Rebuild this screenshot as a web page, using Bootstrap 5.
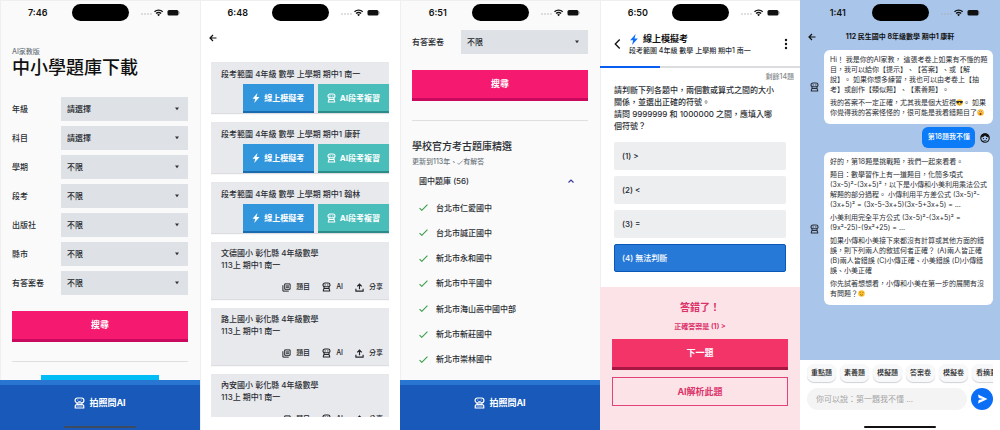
<!DOCTYPE html>
<html lang="zh-Hant">
<head>
<meta charset="utf-8">
<meta name="viewport" content="width=device-width, initial-scale=1">
<title>中小學題庫下載</title>
<link href="https://cdn.jsdelivr.net/npm/bootstrap@5.3.0/dist/css/bootstrap.min.css" rel="stylesheet">
<style>
  body { font-family: Inter, "Noto Sans CJK TC", sans-serif; font-size: 8px; line-height: 12px; color: #2b2e34; font-weight: 500; text-spacing-trim: space-all; }
  h1, h2, p { margin: 0; }
  button, input, select { font-family: inherit; }
  svg { display: block; flex: none; }
  .phone { height: 100vh; min-height: 430px; overflow: hidden; background: #fff; box-shadow: inset 1px 1px #efefef; }
  .phone-gray { background: #fafafa; }
  .phone-chat { background: #a9c5ea; box-shadow: none; }

  /* status bar */
  .status { display: grid; grid-template-columns: 1fr 57px 1fr; align-items: center; padding-top: 4px; color: #111; }
  .status time { font-size: 9px; font-weight: 600; line-height: 17px; padding-left: 4px; }
  .status svg { margin-left: 12px; }
  .island { height: 17px; border-radius: 9px; background: #000; }

  /* search form */
  .pad-x { padding-left: 12px; padding-right: 12px; }
  .tiny { font-size: 7px; line-height: 10px; }
  .brand { padding-top: 26px; }
  .page-title { font-size: 18px; line-height: 22px; font-weight: 500; color: #111; padding-bottom: 18px; }
  .filters { display: grid; gap: 5px; }
  .filter { display: grid; grid-template-columns: 49px 1fr; align-items: center; }
  .form-select { height: 24px; border: 0; border-radius: 0; font-size: 8px; line-height: 12px; font-weight: 500; padding: 0 6px; color: #22252a;
    background: #dee2e6 url("data:image/svg+xml,%3Csvg xmlns='http://www.w3.org/2000/svg' viewBox='0 0 6 4'%3E%3Cpath d='M1 .5h4L3 3.2z' fill='%23333'/%3E%3C/svg%3E") no-repeat right 8px center / 6px 4px; }
  .block-btn { display: block; width: 100%; height: 31px; border: 0; border-bottom: 3px solid #c8095d; border-radius: 0; background: #f5196f; color: #fff; font-size: 9px; line-height: 12px; font-weight: 700; padding: 0; }
  .rule { border-top: 1px solid #dedfe0; margin: 19px 0 0; }
  .promo { height: 30px; width: 67%; background: #00bdf5; margin: 13px auto 0; }
  .ask-bar { height: 50px; border: 0; border-top: 5px solid #2876d2; background: #1859ba; color: #fff; font-size: 9px; line-height: 12px; font-weight: 700; gap: 4px; padding: 0 0 10px; }
  .home-line { width: 72px; height: 2px; border-radius: 1px; left: 50%; margin-left: -36px; bottom: 2px; background: #3d4a60; }
  .phone-chat .home-line { background: #111; }

  /* exam list */
  .back-row { padding: 13px 9px 0; }
  .papers { gap: 9px; margin: 20px 11px 13px; }
  .paper { background: #e8e9ed; box-shadow: 0 1px 1px #dcdde0; flex: none; }
  .paper-name { padding: 6px 10px 4px; }
  .act { height: 29px; border: 0; border-bottom: 2px solid #1b6cae; background: #3296dc; color: #fff; font-size: 8px; line-height: 12px; font-weight: 700; width: 40%; gap: 4px; padding: 0; }
  .act-teal { background: #48bdba; border-color: #2c8a89; }
  .school-name { padding: 5px 10px 10px; }
  .links { gap: 12px; padding: 0 6px 6px; font-size: 7px; line-height: 12px; }
  .links a { color: #22252a; text-decoration: none; gap: 5px; }

  /* school archive */
  .archive { padding-top: 9px; }
  .section-title { font-size: 10px; line-height: 14px; font-weight: 500; margin-top: 18px; }
  .fold { border: 0; background: none; padding: 0 14px 0 7px; height: 28px; font-size: 8px; font-weight: 500; line-height: 12px; color: #2b2e34; }
  .school-list { padding: 0 7px; margin: 0 0 8px; list-style: none; }
  .school-list li { gap: 8px; }
  .school-list svg { color: #3a9f4a; }

  /* quiz */
  .quiz-head { padding: 11px 12px 10px 14px; }
  .quiz-title { font-size: 9px; line-height: 14px; font-weight: 700; color: #111; }
  .progress { height: 2px; border-radius: 0; background: #dcdcde; }
  .progress-bar { background: #0b5df0; }
  .icon-btn { border: 0; background: none; padding: 0; color: #111; }
  .remaining { color: #85888c; padding: 4px 6px 0; }
  .question { padding: 2px 14px 10px; }
  .choices { display: grid; gap: 6px; padding: 0 14px; }
  .choice { height: 28px; border: 0; border-radius: 2px; background: #edeef0; text-align: left; padding: 0 8px; font-size: 8px; line-height: 12px; font-weight: 500; color: #22252a; }
  .choice-on { background: #2779d8; border: 1px solid #0b57b8; color: #fff; padding: 0 7px; }
  .result { background: #fbe3e8; color: #dc3268; padding: 12px 12px 24px; margin-top: 15px; }
  .result h2 { font-size: 10px; line-height: 16px; font-weight: 700; }
  .answer { padding: 7px 0 7px; }
  .next-btn { background: #f23468; border-color: #a81644; }
  .line-btn { height: 29px; border: 1px solid #e0447a; background: none; color: #dc3268; margin-top: 7px; }

  /* chat */
  .chat-head { display: grid; grid-template-columns: 16px 1fr 16px; align-items: center; padding: 9px 8px 6px; font-size: 7px; line-height: 14px; font-weight: 700; color: #111; text-align: center; }
  .msg { display: grid; grid-template-columns: 14px minmax(0, 1fr); align-items: center; padding: 0 7px 0 10px; }
  .bubble { background: #fff; border-radius: 6px; padding: 5px 5px 6px 6px; font-size: 7px; line-height: 10px; display: grid; gap: 3px; white-space: nowrap; font-weight: 400; }
  .bubble svg { display: inline-block; vertical-align: -1px; }
  .mine { gap: 5px; padding: 3px 10px 4px; }
  .mine .bubble { background: #0b7bf8; color: #fff; font-weight: 500; }
  .composer { background: #fff; padding: 4px 7px 20px; }
  .chips { gap: 4px; padding-bottom: 6px; overflow: hidden; }
  .chip { flex: none; height: 18px; border: 0; border-radius: 7px; background: #f7f8fa; box-shadow: 0 1px 1px #cfd1d6; font-size: 7px; line-height: 10px; font-weight: 500; padding: 0 4px; color: #222; }
  .say { height: 22px; border: 0; border-radius: 11px; background: #f4f4f4; font-size: 8px; line-height: 12px; padding: 0 9px; color: #222; min-width: 0; }
  .say::placeholder { color: #a5a5a5; opacity: 1; }
  .send { width: 22px; height: 22px; border: 0; border-radius: 50%; background: #0b6ff5; padding: 0; flex: none; }
</style>
</head>
<body>
<svg width="0" height="0" class="position-absolute" aria-hidden="true">
  <symbol id="robot" viewBox="0 0 20 22">
    <path d="M6.500 2h7a4.300 4.300 0 0 1 0 8.600h-7a4.300 4.300 0 0 1 0-8.600zM3 20v-2q0-3.600 3.600-3.600h6.800Q17 14.400 17 18v2zM4.500 10v5M15.500 10v5" fill="none" stroke="currentColor" stroke-width="2.400"/>
    <circle cx="7" cy="6.300" r="1.300" fill="currentColor"/><circle cx="13" cy="6.300" r="1.300" fill="currentColor"/>
  </symbol>
  <symbol id="robot-solid" viewBox="0 0 22 24">
    <path d="M7 2h8a4.800 4.800 0 0 1 0 9.600H7A4.800 4.800 0 0 1 7 2zM5 11l2 4M17 11l-2 4" fill="none" stroke="currentColor" stroke-width="2.400"/>
    <path d="M6.500 6h2M13.500 6h2M8.500 9h5" stroke="currentColor" stroke-width="1.600"/>
    <path d="M2.500 22v-3.500q0-3.500 4-3.500h9q4 0 4 3.500V22z" fill="none" stroke="currentColor" stroke-width="2.400"/><path d="M5 18h12" stroke="currentColor" stroke-width="1.500"/>
  </symbol>
  <symbol id="bolt" viewBox="0 0 16 20"><path d="M11 0 1 11.500h5.500L4.500 20 15 8H9z" fill="currentColor"/></symbol>
  <symbol id="arrow" viewBox="0 0 16 16"><path d="M15 8H2M8 2 2 8l6 6" fill="none" stroke="currentColor" stroke-width="2.400"/></symbol>
  <symbol id="check" viewBox="0 0 16 12"><path d="m1 7 4 4L15 1" fill="none" stroke="currentColor" stroke-width="2"/></symbol>
  <symbol id="pages" viewBox="0 0 20 20"><path d="M6 2h12v12H6zM2 5v13h13M8.500 6.500h7M8.500 9.500h7" fill="none" stroke="currentColor" stroke-width="2.200"/></symbol>
  <symbol id="share" viewBox="0 0 20 20"><path d="M10 14V3M5 7.500 10 2.500l5 5M2 12.500V18h16v-5.500" fill="none" stroke="currentColor" stroke-width="2.600"/></symbol>
  <symbol id="signal" viewBox="0 0 39 9">
    <g fill="#aaa"><circle cx="1" cy="6" r=".7"/><circle cx="4" cy="6" r=".7"/><circle cx="7" cy="6" r=".7"/><circle cx="10" cy="6" r=".7"/></g>
    <path d="M13.500 3.700a6 6 0 0 1 8.200 0M15.100 5.600a3.500 3.500 0 0 1 5 0" fill="none" stroke="#111" stroke-width="1.400"/><path d="m17.600 8.200-1.400-1.400a2 2 0 0 1 2.800 0z" fill="#111"/>
    <rect x="26.500" y="2" width="11" height="5.500" rx="1.600" fill="#111"/><path d="M38.300 3.800v2" stroke="#999" stroke-width=".8"/>
  </symbol>
</svg>

<main class="row g-0 row-cols-5">

  <section class="col phone phone-gray d-flex flex-column position-relative">
    <div class="status"><time class="text-center">7:46</time><div class="island"></div><svg width="39" height="9"><use href="#signal"/></svg></div>
    <div class="pad-x flex-fill overflow-hidden">
      <p class="tiny text-secondary brand">AI家教版</p>
      <h1 class="page-title">中小學題庫下載</h1>
      <form class="filters">
        <div class="filter"><label for="f1">年級</label><select id="f1" class="form-select"><option>請選擇</option></select></div>
        <div class="filter"><label for="f2">科目</label><select id="f2" class="form-select"><option>請選擇</option></select></div>
        <div class="filter"><label for="f3">學期</label><select id="f3" class="form-select"><option>不限</option></select></div>
        <div class="filter"><label for="f4">段考</label><select id="f4" class="form-select"><option>不限</option></select></div>
        <div class="filter"><label for="f5">出版社</label><select id="f5" class="form-select"><option>不限</option></select></div>
        <div class="filter"><label for="f6">縣市</label><select id="f6" class="form-select"><option>不限</option></select></div>
        <div class="filter"><label for="f7">有答案卷</label><select id="f7" class="form-select"><option>不限</option></select></div>
      </form>
      <button type="button" class="block-btn mt-3">搜尋</button>
      <div class="rule"></div>
      <div class="promo"></div>
    </div>
    <button type="button" class="ask-bar d-flex align-items-center justify-content-center flex-shrink-0"><svg width="11" height="12"><use href="#robot-solid"/></svg>拍照問AI</button>
    <div class="home-line position-absolute"></div>
  </section>

  <section class="col phone d-flex flex-column">
    <div class="status"><time class="text-center">6:48</time><div class="island"></div><svg width="39" height="9"><use href="#signal"/></svg></div>
    <div class="back-row"><button type="button" class="icon-btn d-block" aria-label="返回"><svg width="8" height="8"><use href="#arrow"/></svg></button></div>
    <div class="papers d-flex flex-column overflow-hidden flex-fill">
      <article class="paper"><p class="paper-name">段考範圍 4年級 數學 上學期 期中1 南一</p>
        <div class="d-flex justify-content-end gap-1"><button type="button" class="act d-flex align-items-center justify-content-center"><svg width="8" height="10"><use href="#bolt"/></svg>線上模擬考</button><button type="button" class="act act-teal d-flex align-items-center justify-content-center"><svg width="9" height="10"><use href="#robot"/></svg>AI段考複習</button></div></article>
      <article class="paper"><p class="paper-name">段考範圍 4年級 數學 上學期 期中1 康軒</p>
        <div class="d-flex justify-content-end gap-1"><button type="button" class="act d-flex align-items-center justify-content-center"><svg width="8" height="10"><use href="#bolt"/></svg>線上模擬考</button><button type="button" class="act act-teal d-flex align-items-center justify-content-center"><svg width="9" height="10"><use href="#robot"/></svg>AI段考複習</button></div></article>
      <article class="paper"><p class="paper-name">段考範圍 4年級 數學 上學期 期中1 翰林</p>
        <div class="d-flex justify-content-end gap-1"><button type="button" class="act d-flex align-items-center justify-content-center"><svg width="8" height="10"><use href="#bolt"/></svg>線上模擬考</button><button type="button" class="act act-teal d-flex align-items-center justify-content-center"><svg width="9" height="10"><use href="#robot"/></svg>AI段考複習</button></div></article>
      <article class="paper"><p class="school-name">文德國小 彰化縣 4年級數學<br>113上 期中1 南一</p>
        <div class="links d-flex justify-content-end"><a href="#" class="d-flex align-items-center"><svg width="9" height="9"><use href="#pages"/></svg>題目</a><a href="#" class="d-flex align-items-center"><svg width="9" height="10"><use href="#robot"/></svg>AI</a><a href="#" class="d-flex align-items-center"><svg width="9" height="9"><use href="#share"/></svg>分享</a></div></article>
      <article class="paper"><p class="school-name">路上國小 彰化縣 4年級數學<br>113上 期中1 南一</p>
        <div class="links d-flex justify-content-end"><a href="#" class="d-flex align-items-center"><svg width="9" height="9"><use href="#pages"/></svg>題目</a><a href="#" class="d-flex align-items-center"><svg width="9" height="10"><use href="#robot"/></svg>AI</a><a href="#" class="d-flex align-items-center"><svg width="9" height="9"><use href="#share"/></svg>分享</a></div></article>
      <article class="paper"><p class="school-name">內安國小 彰化縣 4年級數學<br>113上 期中1 南一</p>
        <div class="links d-flex justify-content-end"><a href="#" class="d-flex align-items-center"><svg width="9" height="9"><use href="#pages"/></svg>題目</a><a href="#" class="d-flex align-items-center"><svg width="9" height="10"><use href="#robot"/></svg>AI</a><a href="#" class="d-flex align-items-center"><svg width="9" height="9"><use href="#share"/></svg>分享</a></div></article>
    </div>
  </section>

  <section class="col phone phone-gray d-flex flex-column">
    <div class="status"><time class="text-center">6:51</time><div class="island"></div><svg width="39" height="9"><use href="#signal"/></svg></div>
    <div class="archive pad-x flex-fill d-flex flex-column overflow-hidden">
      <div class="filter"><label for="g1">有答案卷</label><select id="g1" class="form-select"><option>不限</option></select></div>
      <button type="button" class="block-btn mt-3 flex-shrink-0">搜尋</button>
      <div class="rule"></div>
      <h2 class="section-title">學校官方考古題庫精選</h2>
      <p class="tiny text-secondary d-flex align-items-center pt-1">更新到113年、<svg width="6" height="5"><use href="#check"/></svg>有解答</p>
      <button type="button" class="fold d-flex align-items-center justify-content-between flex-shrink-0">國中題庫 (56)<svg width="6" height="4" viewBox="0 0 12 8"><path d="m1 7 5-5 5 5" fill="none" stroke="#3a3aa0" stroke-width="2.400"/></svg></button>
      <ul class="school-list d-flex flex-column flex-fill">
        <li class="d-flex align-items-center flex-fill"><svg width="9" height="7"><use href="#check"/></svg>台北市仁愛國中</li>
        <li class="d-flex align-items-center flex-fill"><svg width="9" height="7"><use href="#check"/></svg>台北市誠正國中</li>
        <li class="d-flex align-items-center flex-fill"><svg width="9" height="7"><use href="#check"/></svg>新北市永和國中</li>
        <li class="d-flex align-items-center flex-fill"><svg width="9" height="7"><use href="#check"/></svg>新北市中平國中</li>
        <li class="d-flex align-items-center flex-fill"><svg width="9" height="7"><use href="#check"/></svg>新北市海山高中國中部</li>
        <li class="d-flex align-items-center flex-fill"><svg width="9" height="7"><use href="#check"/></svg>新北市新莊國中</li>
        <li class="d-flex align-items-center flex-fill"><svg width="9" height="7"><use href="#check"/></svg>新北市崇林國中</li>
      </ul>
    </div>
    <button type="button" class="ask-bar d-flex align-items-center justify-content-center flex-shrink-0"><svg width="11" height="12"><use href="#robot-solid"/></svg>拍照問AI</button>
  </section>

  <section class="col phone d-flex flex-column">
    <div class="status"><time class="text-center">6:50</time><div class="island"></div><svg width="39" height="9"><use href="#signal"/></svg></div>
    <header class="quiz-head d-flex align-items-center gap-2">
      <button type="button" class="icon-btn" aria-label="返回"><svg width="7" height="10" viewBox="0 0 12 18"><path d="M10 1 2 9l8 8" fill="none" stroke="currentColor" stroke-width="2.400"/></svg></button>
      <div class="flex-fill">
        <h2 class="quiz-title d-flex align-items-center gap-1"><svg width="10" height="11" class="text-primary"><use href="#bolt"/></svg>線上模擬考</h2>
        <p class="tiny text-nowrap">段考範圍 4年級 數學 上學期 期中1 南一</p>
      </div>
      <button type="button" class="icon-btn" aria-label="更多"><svg width="4" height="12" viewBox="0 0 4 12" fill="currentColor"><circle cx="2" cy="2" r="1.200"/><circle cx="2" cy="6" r="1.200"/><circle cx="2" cy="10" r="1.200"/></svg></button>
    </header>
    <div class="progress flex-shrink-0"><div class="progress-bar" style="width:30%"></div></div>
    <p class="tiny text-end remaining">剩餘14題</p>
    <p class="question text-nowrap">請判斷下列各題中，兩個數或算式之間的大小<br>關係，並選出正確的符號。<br>請問 9999999 和 1000000 之間，應填入哪<br>個符號？</p>
    <div class="choices">
      <button type="button" class="choice">(1) &gt;</button>
      <button type="button" class="choice">(2) &lt;</button>
      <button type="button" class="choice">(3) =</button>
      <button type="button" class="choice choice-on">(4) 無法判斷</button>
    </div>
    <div class="result flex-fill text-center">
      <h2>答錯了！</h2>
      <p class="tiny fw-bold answer">正確答案是 (1) &gt;</p>
      <button type="button" class="block-btn next-btn">下一題</button>
      <button type="button" class="block-btn line-btn">AI解析此題</button>
    </div>
  </section>

  <section class="col phone phone-chat d-flex flex-column position-relative">
    <div class="status"><time class="text-center">1:41</time><div class="island"></div><svg width="39" height="9"><use href="#signal"/></svg></div>
    <header class="chat-head"><button type="button" class="icon-btn" aria-label="返回"><svg width="8" height="8"><use href="#arrow"/></svg></button><span class="text-nowrap">112 民生國中 8年級數學 期中1 康軒</span></header>
    <div class="msg">
      <svg width="9" height="10"><use href="#robot"/></svg>
      <div class="bubble">
        <p>Hi！ 我是你的AI家教， 這張考卷上如果有不懂的題<br>目，我可以給你【提示】、【答案】、或【解<br>說】。 如果你想多練習，我也可以由考卷上【抽<br>考】或創作【類似題】、【素養題】。</p>
        <p>我的答案不一定正確，尤其我是個大近視<svg width="7" height="7" viewBox="0 0 14 14" role="img" aria-label="墨鏡笑臉"><circle cx="7" cy="7" r="6.500" fill="#fcc531"/><path d="M.5 4h13v2q-1 3-3 3T7.500 6h-1q-1 3-3 3t-3-3z" fill="#2b2b30"/><path d="M4.500 10.500q2.500 2 5 0" stroke="#7a4b12" fill="none"/></svg>。 如果<br>你覺得我的答案怪怪的，很可能是我看錯題目了<svg width="7" height="7" viewBox="0 0 14 14" role="img" aria-label="驚訝"><circle cx="7" cy="7" r="6.500" fill="#fbb52d"/><circle cx="4.500" cy="5" r="1.600" fill="#fff"/><circle cx="9.500" cy="5" r="1.600" fill="#fff"/><circle cx="4.500" cy="5" r=".8"/><circle cx="9.500" cy="5" r=".8"/><ellipse cx="7" cy="10" rx="2" ry="2.200" fill="#7a2f12"/></svg></p>
      </div>
    </div>
    <div class="mine d-flex align-items-center justify-content-end">
      <div class="bubble">第18題我不懂</div>
      <svg width="10" height="10" viewBox="0 0 20 20"><circle cx="10" cy="10" r="8.500" fill="none" stroke="#111" stroke-width="2.200"/><path d="M2 9Q3 1 10 1t8 8q-5 0-8-4-3 4-8 4z" fill="#111"/><circle cx="7" cy="11" r="1.200"/><circle cx="13" cy="11" r="1.200"/><path d="M7 14.500q3 2 6 0" fill="none" stroke="#111" stroke-width="1.300"/></svg>
    </div>
    <div class="msg">
      <svg width="9" height="10"><use href="#robot"/></svg>
      <div class="bubble">
        <p>好的，第18題是挑戰題，我們一起來看看。</p>
        <p>題目：數學習作上有一道題目，化簡多項式<br>(3x-5)²-(3x+5)²，以下是小傳和小美利用乘法公式<br>解題的部分過程。 小傳利用平方差公式 (3x-5)²-<br>(3x+5)² = (3x-5-3x+5)(3x-5+3x+5) = ...</p>
        <p>小美利用完全平方公式 (3x-5)²-(3x+5)² =<br>(9x²-25)-(9x²+25) = ...</p>
        <p>如果小傳和小美接下來都沒有計算或其他方面的錯<br>誤，則下列兩人的敘述何者正確？ (A)兩人皆正確<br>(B)兩人皆錯誤 (C)小傳正確、小美錯誤 (D)小傳錯<br>誤、小美正確</p>
        <p>你先試著想想看，小傳和小美在第一步的展開有沒<br>有問題？<svg width="7" height="7" viewBox="0 0 14 14" role="img" aria-label="微笑"><circle cx="7" cy="7" r="6.500" fill="#fcc02e"/><path d="M3 5q1.200-1.500 2.500 0M8.500 5q1.200-1.500 2.500 0M4 9q3 3 6 0" stroke="#7a4b12" fill="none" stroke-width="1.200"/></svg></p>
      </div>
    </div>
    <form class="composer mt-auto">
      <div class="chips d-flex"><button type="button" class="chip">重點題</button><button type="button" class="chip">素養題</button><button type="button" class="chip">模擬題</button><button type="button" class="chip">答案卷</button><button type="button" class="chip">模擬卷</button><button type="button" class="chip">看摘要</button></div>
      <div class="d-flex gap-1"><input type="text" class="say flex-fill" aria-label="訊息" placeholder="你可以說：第一題我不懂 ..."><button type="button" class="send d-flex align-items-center justify-content-center" aria-label="送出"><svg width="11" height="10" viewBox="0 0 22 20"><path d="M2 1 21 10 2 19l1.500-7L12 10 3.500 8z" fill="#fff"/></svg></button></div>
    </form>
    <div class="home-line position-absolute"></div>
  </section>

</main>
<script src="https://cdn.jsdelivr.net/npm/bootstrap@5.3.0/dist/js/bootstrap.bundle.min.js"></script>
</body>
</html>
